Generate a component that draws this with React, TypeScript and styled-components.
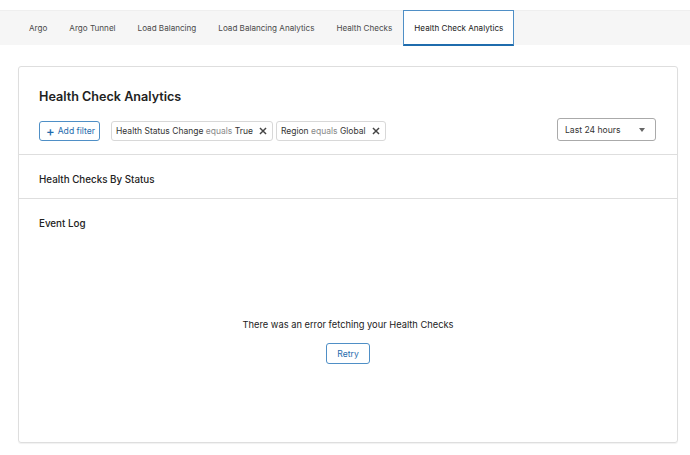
import React from "react";
import styled, { createGlobalStyle } from "styled-components";

const tabs = [
  "Argo",
  "Argo Tunnel",
  "Load Balancing",
  "Load Balancing Analytics",
  "Health Checks",
  "Health Check Analytics",
];

const filters = [
  { field: "Health Status Change", op: "equals", value: "True" },
  { field: "Region", op: "equals", value: "Global" },
];

const GlobalStyle = createGlobalStyle`
  body {
    margin: 0;
    background: #fff;
    font-family: Inter, "Noto Sans", sans-serif;
    color: #222;
  }
`;

const CloseIcon = () => (
  <svg width="8" height="8" viewBox="0 0 10 10">
    <path d="M1.2 1.2 L8.8 8.8 M8.8 1.2 L1.2 8.8" stroke="#444" strokeWidth="1.8" />
  </svg>
);

const App: React.FunctionComponent = () => {
  return (
    <Page>
      <GlobalStyle />
      <TabBar>
        {tabs.map((t, i) => (
          <Tab key={t} active={i === tabs.length - 1}>
            {t}
          </Tab>
        ))}
      </TabBar>
      <Card>
        <Header>
          <Title>Health Check Analytics</Title>
          <FilterRow>
            <Filters>
              <AddButton>
                <Plus>+</Plus>
                <span>Add filter</span>
              </AddButton>
              {filters.map((f) => (
                <Chip key={f.field}>
                  <span>
                    {f.field} <Op>{f.op}</Op> {f.value}
                  </span>
                  <ChipClose>
                    <CloseIcon />
                  </ChipClose>
                </Chip>
              ))}
            </Filters>
            <Select>
              Last 24 hours
              <Caret />
            </Select>
          </FilterRow>
        </Header>
        <Section>
          <SectionTitle>Health Checks By Status</SectionTitle>
        </Section>
        <EventSection>
          <SectionTitle>Event Log</SectionTitle>
          <ErrorBox>
            <ErrorText>There was an error fetching your Health Checks</ErrorText>
            <RetryButton>Retry</RetryButton>
          </ErrorBox>
        </EventSection>
      </Card>
    </Page>
  );
};

const Page = styled.div`
  width: 690px;
  height: 455px;
  padding-top: 10px;
  box-sizing: border-box;
`;

const TabBar = styled.div`
  display: flex;
  background: #f6f6f6;
  border-top: 1px solid #efefef;
  height: 35px;
  padding-left: 18px;
  box-sizing: border-box;
`;

const Tab = styled.div<{ active?: boolean }>`
  display: flex;
  align-items: center;
  padding: 0 10px;
  font-size: 8.1px;
  color: ${(p) => (p.active ? "#1a1a1a" : "#4a4a4a")};
  background: ${(p) => (p.active ? "#fff" : "transparent")};
  border: 1px solid ${(p) => (p.active ? "#4f8fc6" : "transparent")};
  border-bottom: 2px solid ${(p) => (p.active ? "#1f6cad" : "transparent")};
  margin-top: -1px;
  box-sizing: border-box;
  height: 36px;
`;

const Card = styled.div`
  margin: 21px 12px 0 18px;
  height: 377px;
  border: 1px solid #dedede;
  border-radius: 3px;
  box-shadow: 0 1px 1px rgba(0, 0, 0, 0.06);
  display: flex;
  flex-direction: column;
  box-sizing: border-box;
`;

const Header = styled.div`
  padding: 20px 20px 13px 20px;
  border-bottom: 1px solid #dedede;
`;

const Title = styled.h2`
  margin: 0 0 11px 0;
  font-size: 12.6px;
  font-weight: 600;
  color: #222;
  line-height: 20px;
`;

const FilterRow = styled.div`
  display: flex;
  align-items: center;
  justify-content: space-between;
`;

const Filters = styled.div`
  display: flex;
  align-items: center;
  gap: 3px;
`;

const AddButton = styled.button`
  display: flex;
  align-items: center;
  height: 20px;
  padding: 0 4px 0 6px;
  margin-right: 8px;
  border: 1px solid #4f8fc6;
  border-radius: 3px;
  background: #fff;
  color: #1f6cad;
  font-family: inherit;
  font-size: 8.6px;
  margin-top: 3px;
`;

const Plus = styled.span`
  font-size: 13px;
  font-weight: 500;
  margin-right: 3px;
  line-height: 1;
`;

const Chip = styled.div`
  display: flex;
  align-items: center;
  height: 20px;
  padding: 0 5px 0 4px;
  border: 1px solid #d8d8d8;
  border-radius: 3px;
  font-size: 8.5px;
  color: #333;
  margin-top: 3px;
  box-sizing: border-box;
`;

const Op = styled.span`
  color: #888;
`;

const ChipClose = styled.span`
  display: flex;
  margin-left: 6px;
`;

const Select = styled.div`
  position: relative;
  display: flex;
  align-items: center;
  width: 99px;
  height: 23px;
  box-sizing: border-box;
  padding-left: 7px;
  border: 1px solid #aaa;
  border-radius: 3px;
  font-size: 8.6px;
  color: #333;
  margin-right: 1px;
`;

const Caret = styled.span`
  position: absolute;
  right: 10px;
  top: 9px;
  border-left: 3.5px solid transparent;
  border-right: 3.5px solid transparent;
  border-top: 4px solid #666;
`;

const Section = styled.div`
  height: 44px;
  box-sizing: border-box;
  padding: 19px 20px 0 20px;
  border-bottom: 1px solid #dedede;
`;

const SectionTitle = styled.h3`
  margin: 0;
  font-size: 9.8px;
  line-height: 12px;
  font-weight: 500;
  color: #222;
`;

const EventSection = styled.div`
  flex: 1;
  display: flex;
  flex-direction: column;
  padding: 19px 20px 0 20px;
`;

const ErrorBox = styled.div`
  display: flex;
  flex-direction: column;
  align-items: center;
  margin-top: 89px;
`;

const ErrorText = styled.div`
  font-size: 9.3px;
  line-height: 12px;
  color: #222;
  margin-bottom: 12px;
`;

const RetryButton = styled.button`
  height: 21px;
  padding: 0 10px;
  border: 1px solid #4f8fc6;
  border-radius: 3px;
  background: #fff;
  color: #1f6cad;
  font-family: inherit;
  font-size: 8.6px;
`;

export default App;
